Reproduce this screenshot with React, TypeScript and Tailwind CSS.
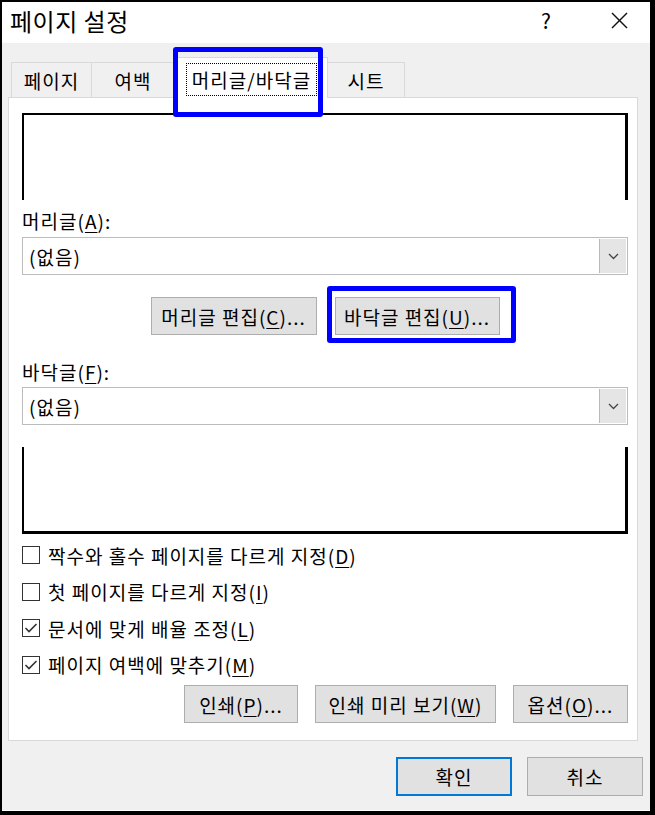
import React from "react";

const FONT = { fontFamily: '"Noto Sans CJK KR", "Noto Sans", sans-serif' };

function Btn({ children, className = "" }: { children: React.ReactNode; className?: string }) {
  return (
    <div
      className={`h-[38px] bg-[#e1e1e1] border border-[#adadad] flex items-center justify-center text-[19px] tracking-[1px] text-black leading-none ${className}`}
    >
      {children}
    </div>
  );
}

function Select() {
  return (
    <div className="h-[38px] bg-white border border-[#7a7a7a]/50 flex items-stretch">
      <div className="flex-1 flex items-center pl-[6px] text-[19px] tracking-[1px] leading-none">(없음)</div>
      <div className="w-[27px] bg-[#e5e5e5] border-l border-[#b9b9b9] m-[1px] flex items-center justify-center">
        <svg width="11" height="7" viewBox="0 0 11 7" fill="none" stroke="#444" strokeWidth="1.3">
          <polyline points="1,1 5.5,5.5 10,1" />
        </svg>
      </div>
    </div>
  );
}

function Check({ checked, children }: { checked?: boolean; children: React.ReactNode }) {
  return (
    <div className="h-[36.5px] flex items-center gap-[8px]">
      <div className="w-[18px] h-[18px] border-[1.5px] border-[#333] bg-white flex items-center justify-center">
        {checked && (
          <svg width="14" height="12" viewBox="0 0 14 12" fill="none" stroke="#333" strokeWidth="1.6">
            <polyline points="1.5,6 5,9.5 12.5,2" />
          </svg>
        )}
      </div>
      <span className="text-[19px] tracking-[1px] leading-none">{children}</span>
    </div>
  );
}

function Mn({ c }: { c: string }) {
  return (
    <>
      (<u className="underline-offset-[3px]">{c}</u>)
    </>
  );
}

export default function App() {
  return (
    <div
      className="relative w-[655px] h-[815px] bg-[#f0f0f0] border-l-2 border-t-2 border-r-[5px] border-b-4 border-black flex flex-col text-black"
      style={FONT}
    >
      {/* 제목 표시줄 */}
      <div className="h-[41px] bg-white flex items-center pl-[8px] pb-[4px]">
        <span className="text-[24px] tracking-[0.5px] leading-none">페이지 설정</span>
        <span className="ml-auto text-[21px] leading-none w-[20px] text-center mr-[55px]">?</span>
        <svg className="mr-[22px]" width="17" height="17" viewBox="0 0 17 17" stroke="#111" strokeWidth="1.4">
          <line x1="1" y1="1" x2="16" y2="16" />
          <line x1="16" y1="1" x2="1" y2="16" />
        </svg>
      </div>

      {/* 탭 */}
      <div className="mt-[14px] h-[40px] pl-[9px] flex items-end text-[19px] tracking-[1px] leading-none">
        <div className="h-[35px] w-[81px] border border-b-0 border-[#d9d9d9] flex items-center justify-center">페이지</div>
        <div className="h-[35px] w-[83px] border border-l-0 border-b-0 border-[#d9d9d9] flex items-center justify-center">여백</div>
        <div className="relative z-10 h-[41px] w-[153px] -mb-px bg-white border border-b-0 border-[#d9d9d9] flex items-center justify-center pt-[2px]">
          <span className="border border-dotted border-black px-[5px] py-[6px]">머리글/바닥글</span>
        </div>
        <div className="h-[35px] w-[77px] border border-l-0 border-b-0 border-[#d9d9d9] flex items-center justify-center">시트</div>
      </div>

      {/* 본문 패널 */}
      <div className="ml-[6px] mr-[12px] h-[644px] bg-white border border-[#d9d9d9] pl-[13px] pr-[9px] flex flex-col">
        <div className="mt-[15px] h-[87px] border-t-2 border-l-2 border-r-[3px] border-black" />

        <div className="mt-[10px] h-[20px] flex items-center text-[19px] tracking-[1px] leading-none">
          머리글<Mn c="A" />:
        </div>
        <div className="mt-[7px]">
          <Select />
        </div>

        <div className="mt-[22px] flex justify-center gap-[18px]">
          <Btn className="w-[166px]">
            머리글 편집<Mn c="C" />...
          </Btn>
          <Btn className="w-[165px]">
            바닥글 편집<Mn c="U" />...
          </Btn>
        </div>

        <div className="mt-[26px] h-[20px] flex items-center text-[19px] tracking-[1px] leading-none">
          바닥글<Mn c="F" />:
        </div>
        <div className="mt-[6px]">
          <Select />
        </div>

        <div className="mt-[22px] h-[87px] border-b-[3px] border-l-2 border-r-[3px] border-black" />

        <div className="mt-[3px] flex flex-col">
          <Check>
            짝수와 홀수 페이지를 다르게 지정<Mn c="D" />
          </Check>
          <Check>
            첫 페이지를 다르게 지정<Mn c="I" />
          </Check>
          <Check checked>
            문서에 맞게 배율 조정<Mn c="L" />
          </Check>
          <Check checked>
            페이지 여백에 맞추기<Mn c="M" />
          </Check>
        </div>

        <div className="mt-[2px] flex justify-end gap-[17px]">
          <Btn className="w-[114px]">
            인쇄<Mn c="P" />...
          </Btn>
          <Btn className="w-[181px]">
            인쇄 미리 보기<Mn c="W" />
          </Btn>
          <Btn className="w-[115px]">
            옵션<Mn c="O" />...
          </Btn>
        </div>
      </div>

      {/* 확인 / 취소 */}
      <div className="mt-[16px] flex justify-end gap-[15px] pr-[7px]">
        <div className="w-[116px] h-[39px] bg-[#e1e1e1] border-2 border-[#0078d7] flex items-center justify-center text-[19px] tracking-[1px] leading-none">
          확인
        </div>
        <div className="w-[116px] h-[39px] bg-[#e1e1e1] border border-[#adadad] flex items-center justify-center text-[19px] tracking-[1px] leading-none">
          취소
        </div>
      </div>

      <div className="mt-auto h-px bg-white" />

      {/* 강조 표시 */}
      <div className="absolute left-[171px] top-[45px] w-[150px] h-[70px] border-[5px] border-[#0000ff] rounded-[3px] z-20" />
      <div className="absolute left-[325px] top-[284px] w-[189px] h-[57px] border-[5px] border-[#0000ff] rounded-[3px] z-20" />
    </div>
  );
}
